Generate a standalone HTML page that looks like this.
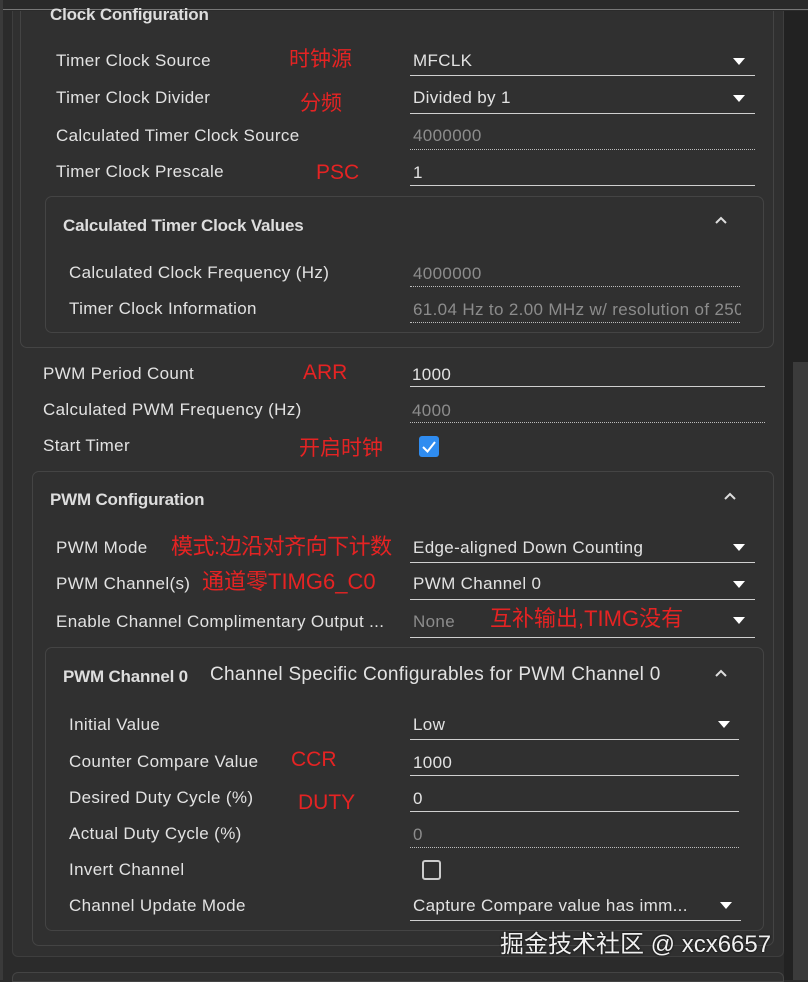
<!DOCTYPE html>
<html><head><meta charset="utf-8"><style>
body{margin:0;width:808px;height:980px;background:#2b2b2b;position:relative;overflow:hidden;font-family:"Liberation Sans","Noto Sans CJK SC",sans-serif;color:#e2e2e2}
div,span,svg{position:absolute;box-sizing:border-box}
.l{font-size:17px;white-space:nowrap;line-height:20px;letter-spacing:0.35px}
.v{font-size:17px;white-space:nowrap;line-height:20px;letter-spacing:0.35px}
.g{color:#8c8c8c}
.r{color:#e52323;font-size:21px;white-space:nowrap;line-height:24px}
.u{height:1px;background:#cfcfcf}
.d{height:0;border-top:1px dotted #bdbdbd}
.h{font-size:17px;font-weight:bold;white-space:nowrap;color:#ddd;letter-spacing:-0.2px}
.tri{width:0;height:0;border-left:6px solid transparent;border-right:6px solid transparent;border-top:7px solid #fff}
.box{border:1px solid #444;border-radius:7px}
</style></head><body>
<div style="left:0;top:0;width:808px;height:10px;background:#2a2a2a;border-bottom:1px solid #777"></div>
<div style="left:0;top:0;width:3px;height:980px;background:#3a3a3a"></div>
<div style="left:12px;top:11px;width:772px;height:946px;background:#303030;border:1px solid #3e3e3e;border-top:none;border-radius:0 0 6px 6px"></div>
<div style="left:784px;top:11px;width:24px;height:969px;background:#222"></div>
<div style="left:793px;top:362px;width:15px;height:618px;background:#3b3b3b"></div>
<div style="left:12px;top:972px;width:772px;height:10px;background:#303030;border:1px solid #444;border-radius:6px 6px 0 0"></div>

<div class="box" style="left:20px;top:11px;width:754px;height:337px;border-top:none;border-radius:0 0 7px 7px"></div>
<div class="h" style="left:50px;top:5px">Clock Configuration</div>

<div class="l" style="left:56px;top:51px">Timer Clock Source</div><div class="r" style="left:289px;top:48px">时钟源</div>
<div class="v" style="left:413px;top:51px">MFCLK</div><div class="tri" style="left:733px;top:58px"></div><div class="u" style="left:410px;top:75px;width:345px"></div>
<div class="l" style="left:56px;top:88px">Timer Clock Divider</div><div class="r" style="left:300px;top:92px">分频</div>
<div class="v" style="left:413px;top:88px">Divided by 1</div><div class="tri" style="left:733px;top:95px"></div><div class="u" style="left:410px;top:113px;width:345px"></div>
<div class="l" style="left:56px;top:126px">Calculated Timer Clock Source</div>
<div class="v g" style="left:413px;top:126px">4000000</div><div class="d" style="left:410px;top:149px;width:345px"></div>
<div class="l" style="left:56px;top:162px">Timer Clock Prescale</div><div class="r" style="left:316px;top:161px">PSC</div>
<div class="v" style="left:413px;top:163px">1</div><div class="u" style="left:410px;top:185px;width:345px"></div>

<div class="box" style="left:45px;top:196px;width:719px;height:137px"></div>
<div class="h" style="left:63px;top:216px">Calculated Timer Clock Values</div>
<svg style="left:714px;top:215px" width="14" height="10"><path d="M2 8 L7 3 L12 8" stroke="#ddd" stroke-width="2" fill="none"/></svg>
<div class="l" style="left:69px;top:263px">Calculated Clock Frequency (Hz)</div>
<div class="v g" style="left:413px;top:264px">4000000</div><div class="d" style="left:410px;top:286px;width:330px"></div>
<div class="l" style="left:69px;top:299px">Timer Clock Information</div>
<div class="v g" style="left:413px;top:300px;width:328px;overflow:hidden">61.04 Hz to 2.00 MHz w/ resolution of 250</div><div class="d" style="left:410px;top:322px;width:330px"></div>

<div class="l" style="left:43px;top:364px">PWM Period Count</div><div class="r" style="left:303px;top:361px">ARR</div>
<div class="v" style="left:412px;top:365px">1000</div><div class="u" style="left:410px;top:386px;width:355px"></div>
<div class="l" style="left:43px;top:400px">Calculated PWM Frequency (Hz)</div>
<div class="v g" style="left:412px;top:401px">4000</div><div class="d" style="left:410px;top:422px;width:355px"></div>
<div class="l" style="left:43px;top:436px">Start Timer</div><div class="r" style="left:299px;top:437px">开启时钟</div>
<div style="left:419px;top:436px;width:20px;height:21px;background:#2f8cf0;border-radius:3px"></div>
<svg style="left:419px;top:436px" width="20" height="21"><path d="M4 11 L8.5 15.5 L16 6" stroke="#fff" stroke-width="2" fill="none"/></svg>

<div class="box" style="left:32px;top:471px;width:742px;height:475px"></div>
<div class="h" style="left:50px;top:490px">PWM Configuration</div>
<svg style="left:723px;top:491px" width="14" height="10"><path d="M2 8 L7 3 L12 8" stroke="#ddd" stroke-width="2" fill="none"/></svg>
<div class="l" style="left:56px;top:538px">PWM Mode</div><div class="r" style="left:171px;top:535px;font-size:22px;letter-spacing:-0.5px">模式:边沿对齐向下计数</div>
<div class="v" style="left:413px;top:538px">Edge-aligned Down Counting</div><div class="tri" style="left:733px;top:544px"></div><div class="u" style="left:410px;top:562px;width:345px"></div>
<div class="l" style="left:56px;top:574px">PWM Channel(s)</div><div class="r" style="left:202px;top:570px;font-size:22px">通道零TIMG6_C0</div>
<div class="v" style="left:413px;top:574px">PWM Channel 0</div><div class="tri" style="left:733px;top:581px"></div><div class="u" style="left:410px;top:599px;width:345px"></div>
<div class="l" style="left:56px;top:612px">Enable Channel Complimentary Output ...</div>
<div class="v g" style="left:413px;top:612px">None</div><div class="r" style="left:490px;top:607px;font-size:22px">互补输出,TIMG没有</div><div class="tri" style="left:733px;top:617px"></div><div class="u" style="left:410px;top:637px;width:345px"></div>

<div class="box" style="left:45px;top:647px;width:719px;height:284px"></div>
<div class="h" style="left:63px;top:667px">PWM Channel 0</div>
<div class="v" style="left:210px;top:665px;font-size:19px;letter-spacing:0.3px">Channel Specific Configurables for PWM Channel 0</div>
<svg style="left:714px;top:668px" width="14" height="10"><path d="M2 8 L7 3 L12 8" stroke="#ddd" stroke-width="2" fill="none"/></svg>
<div class="l" style="left:69px;top:715px">Initial Value</div>
<div class="v" style="left:413px;top:715px">Low</div><div class="tri" style="left:718px;top:721px"></div><div class="u" style="left:410px;top:739px;width:329px"></div>
<div class="l" style="left:69px;top:752px">Counter Compare Value</div><div class="r" style="left:291px;top:748px">CCR</div>
<div class="v" style="left:413px;top:753px">1000</div><div class="u" style="left:410px;top:775px;width:329px"></div>
<div class="l" style="left:69px;top:788px">Desired Duty Cycle (%)</div><div class="r" style="left:298px;top:791px">DUTY</div>
<div class="v" style="left:413px;top:789px">0</div><div class="u" style="left:410px;top:811px;width:329px"></div>
<div class="l" style="left:69px;top:824px">Actual Duty Cycle (%)</div>
<div class="v g" style="left:413px;top:825px">0</div><div class="d" style="left:410px;top:847px;width:329px"></div>
<div class="l" style="left:69px;top:860px">Invert Channel</div>
<div style="left:422px;top:860px;width:19px;height:20px;border:2px solid #ccc;border-radius:3px"></div>
<div class="l" style="left:69px;top:896px">Channel Update Mode</div>
<div class="v" style="left:413px;top:896px">Capture Compare value has imm...</div><div class="tri" style="left:720px;top:902px"></div><div class="u" style="left:410px;top:920px;width:331px"></div>

<div style="left:500px;top:924px;font-size:24px;color:#f0f0f0;white-space:nowrap;text-shadow:0 0 2px #000">掘金技术社区 @ xcx6657</div>
</body></html>
